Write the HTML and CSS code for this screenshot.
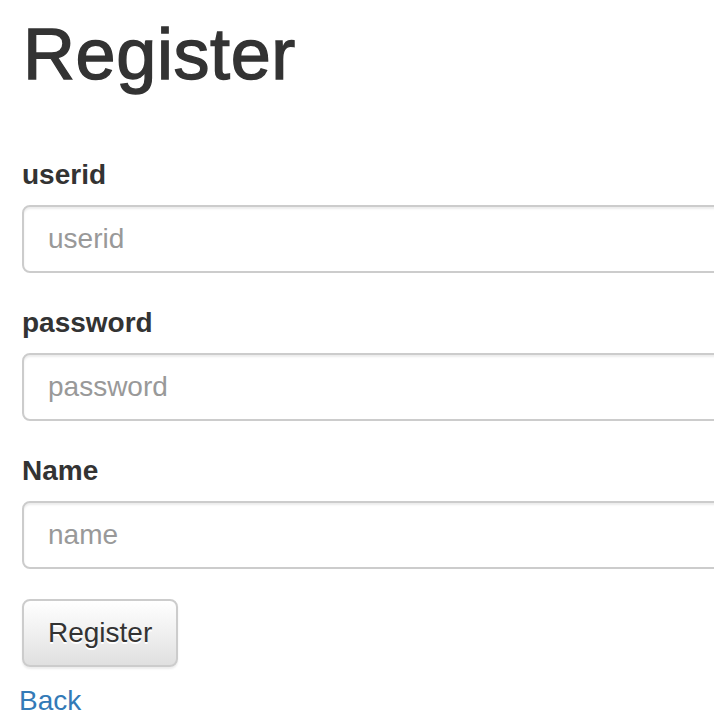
FILE: index.html
```html
<!DOCTYPE html>
<html>
<head>
<meta charset="utf-8">
<link rel="stylesheet" href="styles.css">
</head>
<body>
<div class="container">
  <h1 class="title">Register</h1>
  <form class="form">
    <div class="form-group">
      <label class="label" for="userid">userid</label>
      <input class="control" id="userid" type="text" placeholder="userid">
    </div>
    <div class="form-group">
      <label class="label" for="password">password</label>
      <input class="control" id="password" type="password" placeholder="password">
    </div>
    <div class="form-group">
      <label class="label" for="name">Name</label>
      <input class="control" id="name" type="text" placeholder="name">
    </div>
    <button class="btn" type="button">Register</button>
  </form>
  <div class="back-row"><a class="back" href="#">Back</a></div>
</div>
</body>
</html>
```
FILE: styles.css
```css
html, body {
  margin: 0;
  padding: 0;
  overflow: hidden;
  background: #fff;
}
body {
  font-family: "Liberation Sans", Arial, sans-serif;
  font-size: 28px;
  line-height: 1.42857;
  color: #333;
}
.container {
  padding-left: 22px;
  width: 900px;
}
.title {
  font-size: 72px;
  font-weight: 500;
  line-height: 1.1;
  margin: 15px 0 61px 1px;
  color: #333;
  -webkit-text-stroke: 1.4px #333;
  letter-spacing: 0.6px;
}
.form-group {
  margin-bottom: 30px;
}
.label {
  display: block;
  font-weight: bold;
  margin-bottom: 10px;
  max-width: 100%;
}
.control {
  display: block;
  box-sizing: border-box;
  width: 860px;
  height: 68px;
  padding: 12px 24px;
  font-family: inherit;
  font-size: 28px;
  line-height: 1.42857;
  color: #555;
  background: #fff;
  border: 2px solid #ccc;
  border-radius: 8px;
  box-shadow: inset 0 2px 2px rgba(0,0,0,.075);
  outline: none;
}
.control::placeholder {
  color: #999;
}
.btn {
  display: inline-block;
  box-sizing: border-box;
  height: 68px;
  padding: 12px 24px;
  font-family: inherit;
  font-size: 28px;
  line-height: 1.42857;
  color: #333;
  border: 2px solid #ccc;
  border-radius: 8px;
  background: linear-gradient(to bottom, #fff 0, #e0e0e0 100%);
  text-shadow: 0 2px 0 #fff;
  box-shadow: inset 0 2px 0 rgba(255,255,255,.15), 0 2px 2px rgba(0,0,0,.075);
}
.back-row {
  margin-top: 14px;
  margin-left: -3px;
}
.back {
  color: #337ab7;
  text-decoration: none;
}
```
